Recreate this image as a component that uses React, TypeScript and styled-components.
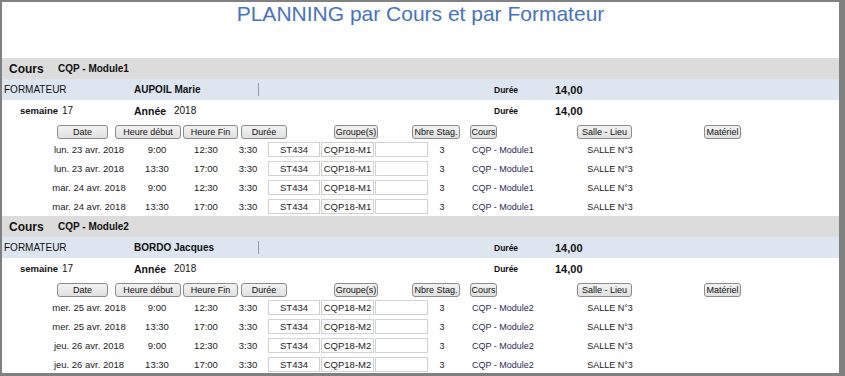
import React from 'react'
import styled, { createGlobalStyle } from 'styled-components'

const GlobalStyle = createGlobalStyle`
  html, body {
    margin: 0;
    padding: 0;
    background: #fff;
  }
  body {
    font-family: "Liberation Sans", Arial, Helvetica, sans-serif;
    color: #111;
  }
`

const Frame = styled.div`
  width: 845px;
  height: 376px;
  box-sizing: border-box;
  border-style: solid;
  border-color: #808080;
  border-width: 2px 6px 3px 2px;
  background: #fff;
  overflow: hidden;
  display: flex;
  flex-direction: column;
`

const Title = styled.h1`
  margin: 0;
  flex: none;
  height: 56px;
  font-size: 21px;
  line-height: 24px;
  font-weight: normal;
  color: #4472c4;
  text-align: center;
`

const Section = styled.section`
  flex: none;
  height: 158px;
  display: flex;
  flex-direction: column;
`

const tones = {
  gray: '#dcdcdc',
  blue: '#dde6f0',
  white: '#ffffff',
}

const Band = styled.div<{ $tone: keyof typeof tones }>`
  height: 21px;
  flex: none;
  display: flex;
  align-items: center;
  background: ${p => tones[p.$tone]};
`

const Cell = styled.span<{ $ml?: number; $w?: number; $size?: number; $bold?: boolean }>`
  flex: none;
  margin-left: ${p => p.$ml ?? 0}px;
  width: ${p => (p.$w ? `${p.$w}px` : 'auto')};
  font-size: ${p => p.$size ?? 10}px;
  font-weight: ${p => (p.$bold ? 'bold' : 'normal')};
  white-space: nowrap;
`

const Divider = styled.span`
  flex: none;
  width: 1px;
  height: 13px;
  background: #9a9a9a;
`

const HeaderRow = styled.div`
  height: 19px;
  flex: none;
  box-sizing: border-box;
  padding-top: 4px;
  display: flex;
  align-items: flex-start;
`

const HeadButton = styled.button<{ $ml: number; $w: number }>`
  flex: none;
  margin: 0 0 0 ${p => p.$ml}px;
  padding: 0;
  width: ${p => p.$w}px;
  height: 14px;
  box-sizing: border-box;
  border: 1px solid #8c8c8c;
  border-radius: 3px;
  background: linear-gradient(#f2f2f2, #e0e0e0);
  font-family: inherit;
  font-size: 9px;
  line-height: 12px;
  color: #111;
  text-align: center;
  white-space: nowrap;
`

const DataRow = styled.div`
  height: 19px;
  flex: none;
  display: flex;
  align-items: center;
`

const Value = styled.span<{ $ml?: number; $w: number; $size?: number; $align?: string; $color?: string }>`
  flex: none;
  margin-left: ${p => p.$ml ?? 0}px;
  width: ${p => p.$w}px;
  font-size: ${p => p.$size ?? 9.5}px;
  text-align: ${p => p.$align ?? 'center'};
  color: ${p => p.$color ?? '#222'};
  white-space: nowrap;
`

const Field = styled.span<{ $ml?: number; $w: number }>`
  flex: none;
  margin-left: ${p => p.$ml ?? 0}px;
  width: ${p => p.$w}px;
  height: 15px;
  box-sizing: border-box;
  border: 1px solid #d2d2d2;
  background: #fff;
  font-size: 9.5px;
  line-height: 13px;
  text-align: center;
  color: #222;
  white-space: nowrap;
`

const headers = [
  { label: 'Date', ml: 55, w: 51 },
  { label: 'Heure début', ml: 7, w: 66 },
  { label: 'Heure Fin', ml: 2, w: 55 },
  { label: 'Durée', ml: 3, w: 46 },
  { label: 'Groupe(s)', ml: 47, w: 44 },
  { label: 'Nbre Stag.', ml: 34, w: 48 },
  { label: 'Cours', ml: 10, w: 27 },
  { label: 'Salle - Lieu', ml: 80, w: 55 },
  { label: 'Matériel', ml: 72, w: 37 },
]

type Seance = { date: string; debut: string; fin: string }

type Planning = {
  cours: string
  formateur: string
  groupe: string
  seances: Seance[]
}

const plannings: Planning[] = [
  {
    cours: 'CQP - Module1',
    formateur: 'AUPOIL Marie',
    groupe: 'CQP18-M1',
    seances: [
      { date: 'lun. 23 avr. 2018', debut: '9:00', fin: '12:30' },
      { date: 'lun. 23 avr. 2018', debut: '13:30', fin: '17:00' },
      { date: 'mar. 24 avr. 2018', debut: '9:00', fin: '12:30' },
      { date: 'mar. 24 avr. 2018', debut: '13:30', fin: '17:00' },
    ],
  },
  {
    cours: 'CQP - Module2',
    formateur: 'BORDO Jacques',
    groupe: 'CQP18-M2',
    seances: [
      { date: 'mer. 25 avr. 2018', debut: '9:00', fin: '12:30' },
      { date: 'mer. 25 avr. 2018', debut: '13:30', fin: '17:00' },
      { date: 'jeu. 26 avr. 2018', debut: '9:00', fin: '12:30' },
      { date: 'jeu. 26 avr. 2018', debut: '13:30', fin: '17:00' },
    ],
  },
]

const CoursBlock = ({ planning }: { planning: Planning }) => (
  <Section>
    <Band $tone="gray">
      <Cell $ml={7} $w={49} $size={12} $bold>Cours</Cell>
      <Cell $size={10} $bold>{planning.cours}</Cell>
    </Band>
    <Band $tone="blue">
      <Cell $ml={2} $w={130}>FORMATEUR</Cell>
      <Cell $w={124} $bold>{planning.formateur}</Cell>
      <Divider />
      <Cell $ml={235} $w={61} $size={8.5} $bold>Durée</Cell>
      <Cell $size={11} $bold>14,00</Cell>
    </Band>
    <Band $tone="white">
      <Cell $ml={18} $w={42} $size={9.5} $bold>semaine</Cell>
      <Cell $w={72}>17</Cell>
      <Cell $w={40} $size={10.5} $bold>Année</Cell>
      <Cell $w={320}>2018</Cell>
      <Cell $w={61} $size={8.5} $bold>Durée</Cell>
      <Cell $size={11} $bold>14,00</Cell>
    </Band>
    <HeaderRow>
      {headers.map(h => (
        <HeadButton key={h.label} $ml={h.ml} $w={h.w}>{h.label}</HeadButton>
      ))}
    </HeaderRow>
    {planning.seances.map((s, i) => (
      <DataRow key={i}>
        <Value $ml={46} $w={82}>{s.date}</Value>
        <Value $w={54}>{s.debut}</Value>
        <Value $w={44}>{s.fin}</Value>
        <Value $w={40}>3:30</Value>
        <Field $w={52}>ST434</Field>
        <Field $ml={1} $w={53}>{planning.groupe}</Field>
        <Field $ml={1} $w={53} />
        <Value $w={28} $size={9}>3</Value>
        <Value $ml={16} $w={100} $size={9} $align="left" $color="#2a2a55">{planning.cours}</Value>
        <Value $w={76} $size={9}>SALLE N°3</Value>
      </DataRow>
    ))}
  </Section>
)

const App = () => (
  <>
    <GlobalStyle />
    <Frame>
      <Title>PLANNING par Cours et par Formateur</Title>
      {plannings.map(p => (
        <CoursBlock key={p.cours} planning={p} />
      ))}
    </Frame>
  </>
)

export default App
